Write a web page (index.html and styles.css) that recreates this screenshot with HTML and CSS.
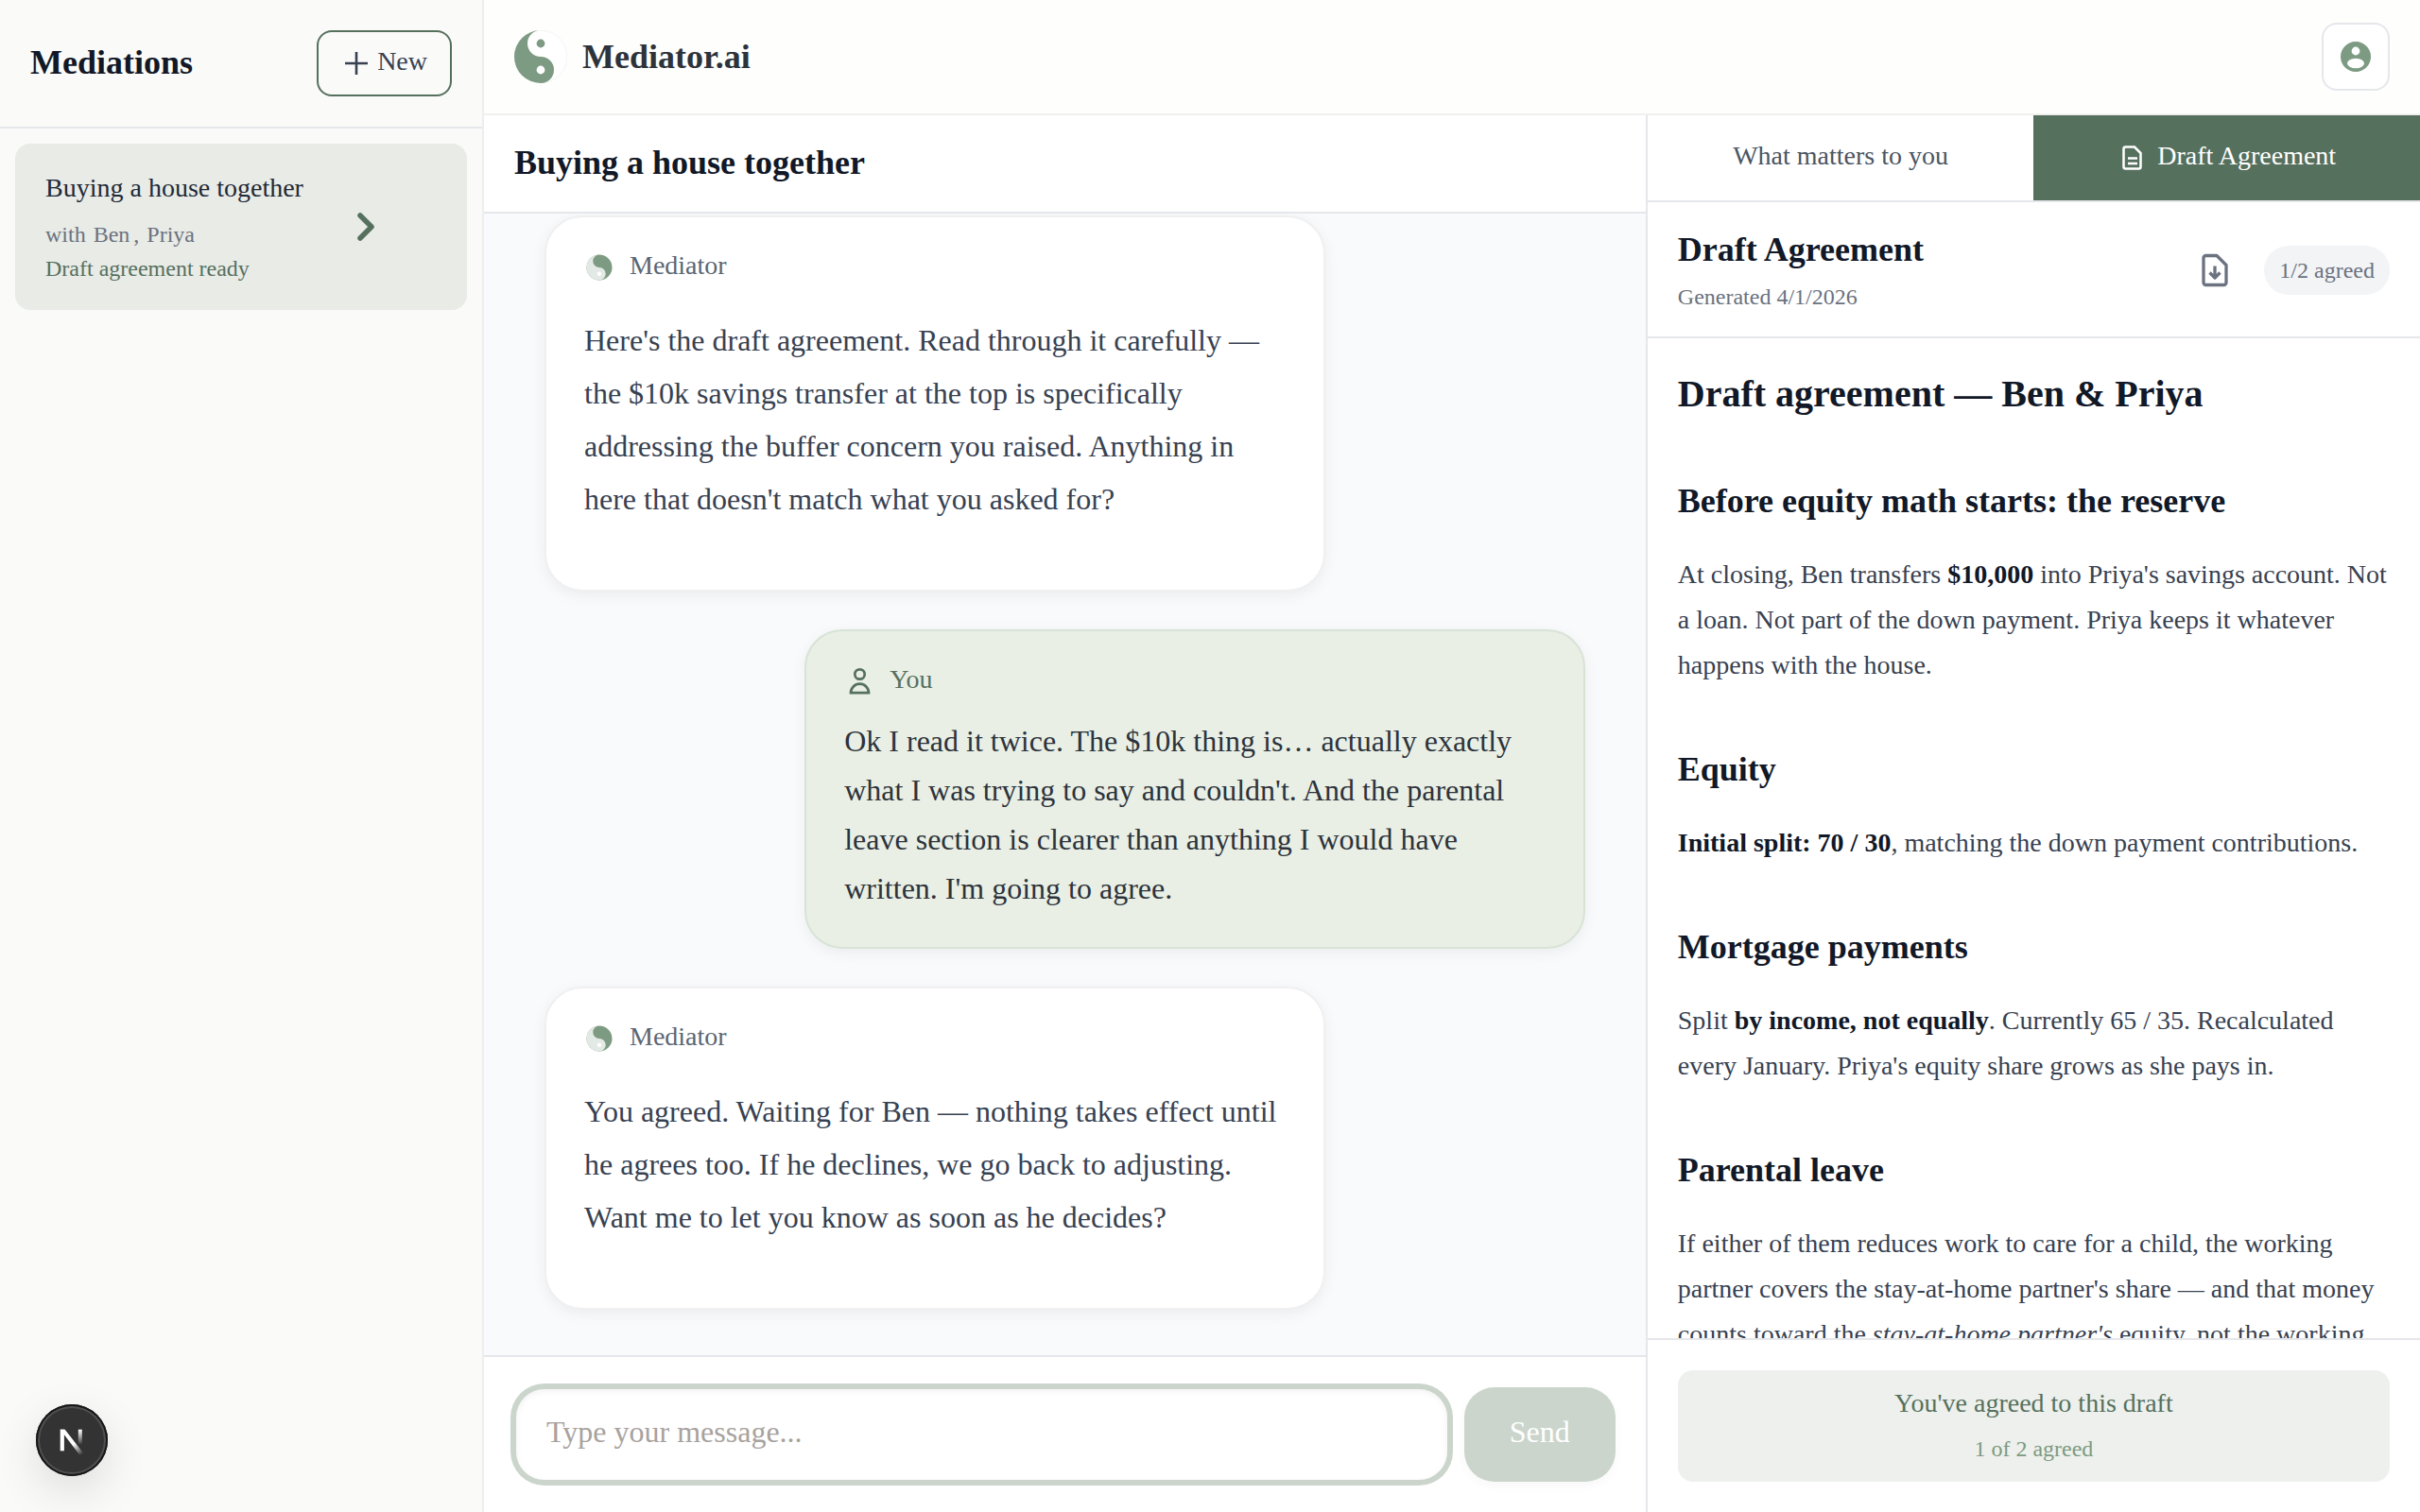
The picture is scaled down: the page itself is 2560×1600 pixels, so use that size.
FILE: index.html
```html
<!DOCTYPE html>
<html lang="en">
<head>
  <meta charset="UTF-8" />
  <meta name="viewport" content="width=device-width, initial-scale=1.0" />
  <title>Mediator.ai</title>
  <link rel="stylesheet" href="styles.css">
</head>
<body>
  <div class="app">
    <aside class="sidebar">
      <div class="sidebar-header">
        <h2 class="heading">Mediations</h2>
        <button type="button" class="new-btn">
          <svg class="icon" viewBox="0 0 32 32" aria-hidden="true"><path d="M16 4v24M4 16h24" fill="none" stroke="currentColor" stroke-width="2.6"/></svg>
          New
        </button>
      </div>
      <nav class="mediation-list">
        <a href="#" class="mediation">
          <div class="mediation-info">
            <div class="mediation-title">Buying a house together</div>
            <div class="mediation-people"><span>with</span><span class="person"><span>Ben</span><span>,</span></span><span>Priya</span></div>
            <div class="mediation-status">Draft agreement ready</div>
          </div>
          <svg class="chevron" viewBox="0 0 40 40" aria-hidden="true"><path d="M13 8l12 12-12 12" fill="none" stroke="currentColor" stroke-width="5.5" stroke-linecap="round" stroke-linejoin="round"/></svg>
        </a>
      </nav>
    </aside>

    <div class="workspace">
      <header class="topbar">
        <a href="#" class="brand">
          <svg class="brand-logo" viewBox="0 0 56 56" aria-hidden="true">
            <circle cx="28" cy="28" r="27.8" fill="#fff" stroke="#dfe5e0" stroke-width=".4"/>
            <path d="M28 0a28 28 0 0 0 0 56a14 14 0 0 0 0-28a14 14 0 0 1 0-28z" fill="#7d9a82"/>
            <circle cx="28" cy="14" r="4.4" fill="#7d9a82"/>
            <circle cx="28" cy="42" r="4.4" fill="#fff"/>
          </svg>
          <span class="brand-name">Mediator.ai</span>
        </a>
        <button type="button" class="account-btn" aria-label="Account">
          <svg class="icon" viewBox="0 0 32 32" aria-hidden="true">
            <circle cx="16" cy="16" r="16" fill="#7d9a82"/>
            <circle cx="16" cy="10" r="4.4" fill="#fff"/>
            <ellipse cx="16" cy="23" rx="9" ry="5.2" fill="#fff"/>
          </svg>
        </button>
      </header>

      <div class="columns">
        <main class="chat">
          <div class="chat-header">
            <h1 class="heading">Buying a house together</h1>
          </div>

          <div class="messages">
            <article class="message mediator">
              <div class="sender">
                <svg class="icon" viewBox="0 0 32 32" aria-hidden="true">
                  <circle cx="16" cy="16" r="13.5" fill="#7d9a82"/>
                  <path d="M16 2.5a13.5 13.5 0 0 0 0 27a6.75 6.75 0 0 0 0-13.5a6.75 6.75 0 0 1 0-13.5z" fill="#e3e9e4"/>
                  <circle cx="16" cy="22.7" r="2.2" fill="#fff"/>
                </svg>
                <span>Mediator</span>
              </div>
              <p>Here's the draft agreement. Read through it carefully — the $10k savings transfer at the top is specifically addressing the buffer concern you raised. Anything in here that doesn't match what you asked for?</p>
            </article>

            <article class="message you">
              <div class="sender">
                <svg class="icon" viewBox="0 0 32 32" aria-hidden="true">
                  <g fill="none" stroke="currentColor" stroke-width="2.7">
                    <circle cx="16.500" cy="8.5" r="5.2"/>
                    <path d="M7 28.200a9.500 9.500 0 0 1 19 0z"/>
                  </g>
                </svg>
                <span>You</span>
              </div>
              <p>Ok I read it twice. The $10k thing is… actually exactly what I was trying to say and couldn't. And the parental leave section is clearer than anything I would have written. I'm going to agree.</p>
            </article>

            <article class="message mediator">
              <div class="sender">
                <svg class="icon" viewBox="0 0 32 32" aria-hidden="true">
                  <circle cx="16" cy="16" r="13.5" fill="#7d9a82"/>
                  <path d="M16 2.5a13.5 13.5 0 0 0 0 27a6.75 6.75 0 0 0 0-13.5a6.75 6.75 0 0 1 0-13.5z" fill="#e3e9e4"/>
                  <circle cx="16" cy="22.7" r="2.2" fill="#fff"/>
                </svg>
                <span>Mediator</span>
              </div>
              <p>You agreed. Waiting for Ben — nothing takes effect until he agrees too. If he declines, we go back to adjusting. Want me to let you know as soon as he decides?</p>
            </article>
          </div>

          <form class="composer">
            <input type="text" class="composer-input" placeholder="Type your message..." aria-label="Message">
            <button type="button" class="send-btn">Send</button>
          </form>
        </main>

        <section class="panel">
          <div class="tabs">
            <button type="button" class="tab">What matters to you</button>
            <button type="button" class="tab active">
              <svg class="icon" viewBox="0 0 32 32" aria-hidden="true">
                <path d="M8.5 4.5h9.5l6.5 6.500v14.500a2 2 0 0 1-2 2h-14a2 2 0 0 1-2-2v-19a2 2 0 0 1 2-2zM11 16.500h10M11 22h10" fill="none" stroke="currentColor" stroke-width="2.5"/>
              </svg>
              Draft Agreement
            </button>
          </div>

          <div class="panel-header">
            <div>
              <h2 class="heading">Draft Agreement</h2>
              <div class="generated">Generated 4/1/2026</div>
            </div>
            <div class="panel-actions">
              <button type="button" class="download-btn" aria-label="Download draft">
                <svg viewBox="0 0 40 40" aria-hidden="true">
                  <path d="M10.5 4.5h11.5l10 10v18.500a2.500 2.500 0 0 1-2.500 2.500h-19a2.500 2.500 0 0 1-2.500-2.500v-26a2.500 2.500 0 0 1 2.500-2.500zM20 15.500v12M14.500 22.500l5.500 5.500 5.500-5.500" fill="none" stroke="currentColor" stroke-width="3.3" stroke-linejoin="round"/>
                </svg>
              </button>
              <span class="pill">1/2 agreed</span>
            </div>
          </div>

          <div class="draft">
            <h1>Draft agreement — Ben &amp; Priya</h1>
            <h2>Before equity math starts: the reserve</h2>
            <p>At closing, Ben transfers <strong>$10,000</strong> into Priya's savings account. Not a loan. Not part of the down payment. Priya keeps it whatever happens with the house.</p>
            <h2>Equity</h2>
            <p><strong>Initial split: 70 / 30</strong>, matching the down payment contributions.</p>
            <h2>Mortgage payments</h2>
            <p>Split <strong>by income, not equally</strong>. Currently 65 / 35. Recalculated every January. Priya's equity share grows as she pays in.</p>
            <h2>Parental leave</h2>
            <p>If either of them reduces work to care for a child, the working partner covers the stay-at-home partner's share — and that money counts toward the <em>stay-at-home partner's</em> equity, not the working</p>
          </div>

          <div class="panel-footer">
            <div class="agreed">
              <div>You've agreed to this draft</div>
              <div class="agreed-count">1 of 2 agreed</div>
            </div>
          </div>
        </section>
      </div>
    </div>
  </div>

  <!-- dev tools badge -->
  <button type="button" class="dev-badge" aria-label="Open dev tools">
    <svg viewBox="0 0 76 76" aria-hidden="true">
      <defs>
        <linearGradient id="fadeLong" gradientUnits="userSpaceOnUse" x1="40" y1="42" x2="49" y2="53">
          <stop stop-color="#fff"/><stop offset="1" stop-color="#fff" stop-opacity="0"/>
        </linearGradient>
        <linearGradient id="fadeShort" gradientUnits="userSpaceOnUse" x1="46" y1="27" x2="46" y2="43">
          <stop stop-color="#fff"/><stop offset="1" stop-color="#fff" stop-opacity="0"/>
        </linearGradient>
      </defs>
      <rect x="25.7" y="26.7" width="4.2" height="22.6" fill="#fff"/>
      <path d="M25.7 26.7h5l19.500 25-3.500 2.500z" fill="url(#fadeLong)"/>
      <rect x="44.8" y="26.7" width="4" height="16" fill="url(#fadeShort)"/>
    </svg>
  </button>
</body>
</html>
```
FILE: styles.css
```css
* { box-sizing: border-box; }
body { margin: 0; font-family: "Liberation Serif", "Times New Roman", serif; font-size: 28px; line-height: 42px; color: #374151; background: #fff; }
h1, h2, p { margin: 0; }
button, input { font: inherit; color: inherit; margin: 0; }
button { cursor: pointer; }
a { color: inherit; text-decoration: none; }
svg { display: block; flex-shrink: 0; }
.icon { width: 32px; height: 32px; }
.heading { font-size: 36px; line-height: 52px; padding-bottom: 2px; font-weight: bold; color: #111827; }

/* icons beside a label sit on its baseline */
.new-btn .icon, .sender .icon, .tab .icon { margin-top: 4px; }

.app { display: flex; height: 100vh; overflow: hidden; }

/* sidebar */
.sidebar { width: 20%; background: #fafaf9; border-right: 2px solid #efeeee; }
.sidebar-header { display: flex; align-items: center; justify-content: space-between; padding: 32px; border-bottom: 2px solid #e5e7eb; }
.new-btn { display: flex; align-items: center; gap: 6px; padding: 10px 24px 14px; border: 2px solid #56705e; border-radius: 16px; background: transparent; }
.mediation-list { padding: 16px; }
.mediation { display: flex; align-items: center; padding: 26px 32px; border-radius: 16px; background: #e8ebe6; }
.mediation-info { width: 320px; }
.mediation-title { color: #1f2937; margin-bottom: 10px; }
.mediation-people, .mediation-status { font-size: 24px; line-height: 36px; }
.mediation-people { display: flex; gap: 8px; color: #6b7280; }
.person { display: flex; gap: 4px; }
.mediation-status { color: #56705e; }
.chevron { width: 40px; height: 40px; color: #56705e; }

/* top bar */
.workspace { flex: 1; min-width: 0; display: flex; flex-direction: column; }
.topbar { display: flex; align-items: center; justify-content: space-between; padding: 24px 32px; background: #fefefd; border-bottom: 2px solid #f1f0ef; }
.brand { display: flex; align-items: center; gap: 16px; }
.brand-logo { width: 56px; height: 56px; }
.brand-name { font-size: 36px; line-height: 54px; font-weight: bold; color: #2d333b; }
.account-btn { display: flex; align-items: center; justify-content: center; width: 72px; height: 72px; padding: 0; border: 2px solid #e5e7eb; border-radius: 16px; background: #fff; }

.columns { flex: 1; min-height: 0; display: flex; }

/* chat */
.chat { width: 60%; display: flex; flex-direction: column; }
.chat-header { padding: 24px 32px; border-bottom: 2px solid #e5e7eb; }
.messages { flex: 1; min-height: 0; overflow: hidden; display: flex; flex-direction: column; justify-content: flex-end; gap: 40px; padding: 0 64px 48px; background: #f9fafc; }
.message { flex-shrink: 0; width: 75%; padding: 32px 40px 36px; border: 2px solid #f1f0f0; border-radius: 40px; font-size: 32px; box-shadow: 0 4px 16px rgba(0, 0, 0, 0.06); }
.message.mediator { background: #fff; }
.message.mediator p { line-height: 56px; padding: 12px 0 32px; }
.message.you { align-self: flex-end; background: #e9efe5; border-color: #d8e3d6; color: #2d333b; }
.message.you p { line-height: 52px; }
.sender { display: flex; align-items: center; gap: 16px; margin-bottom: 20px; font-size: 28px; line-height: 38px; color: #5b6673; }
.message.you .sender { color: #56705e; }

.composer { display: flex; gap: 16px; padding: 32px; border-top: 2px solid #e5e7eb; }
.composer-input { flex: 1; min-width: 0; height: 100px; padding: 20px 32px 26px; border: 2px solid #cbd5cc; border-radius: 32px; outline: none; background: #fff; font-size: 32px; box-shadow: 0 0 0 4px #cbd5cc, inset 0 2px 6px rgba(0, 0, 0, 0.06); }
.composer-input::placeholder { color: #a8a29e; opacity: 1; }
.send-btn { padding: 0 48px 6px; border: none; border-radius: 32px; background: #cbd5cc; color: #fff; font-size: 32px; box-shadow: 0 4px 12px rgba(0, 0, 0, 0.03); }

/* agreement panel */
.panel { width: 40%; display: flex; flex-direction: column; border-left: 2px solid #e5e7eb; }
.tabs { display: flex; border-bottom: 2px solid #e5e7eb; }
.tab { flex: 1; display: flex; align-items: center; justify-content: center; gap: 10px; padding: 22px 32px 26px; border: none; background: #fff; color: #4b5563; }
.tab.active { background: #56705e; color: #fff; }
.panel-header { display: flex; align-items: center; justify-content: space-between; padding: 24px 32px 22px; border-bottom: 2px solid #e5e7eb; }
.generated { margin-top: 2px; font-size: 24px; line-height: 40px; color: #6b7280; }
.panel-actions { display: flex; align-items: center; gap: 32px; }
.download-btn { width: 40px; height: 40px; padding: 0; border: none; background: none; color: #6b7280; }
.pill { padding: 6px 16px; border-radius: 26px; background: #f3f4f6; color: #6b7280; font-size: 24px; line-height: 40px; }
.draft { flex: 1; min-height: 0; overflow: hidden; padding: 29px 32px 0; }
.draft h1 { font-size: 40px; line-height: 60px; color: #111827; }
.draft h2 { margin: 59px 0 27px; font-size: 36px; line-height: 54px; color: #111827; }
.draft h1 + h2 { margin-top: 56px; }
.draft p { line-height: 48px; }
.draft strong { color: #111827; }
.panel-footer { padding: 32px; border-top: 2px solid #e5e7eb; }
.agreed { padding: 11px 32px 15px; border-radius: 16px; background: #edf0ec; color: #56705e; text-align: center; line-height: 48px; }
.agreed-count { margin-top: 4px; font-size: 24px; line-height: 40px; color: #7d9a82; }

/* floats over the sidebar */
.dev-badge { position: fixed; left: 38px; bottom: 38px; width: 76px; height: 76px; padding: 0; border: none; border-radius: 50%; background: #333; box-shadow: inset 0 0 0 2px #171717, inset 0 0 0 4px #505050, 0 16px 48px rgba(0, 0, 0, 0.12); }
```
